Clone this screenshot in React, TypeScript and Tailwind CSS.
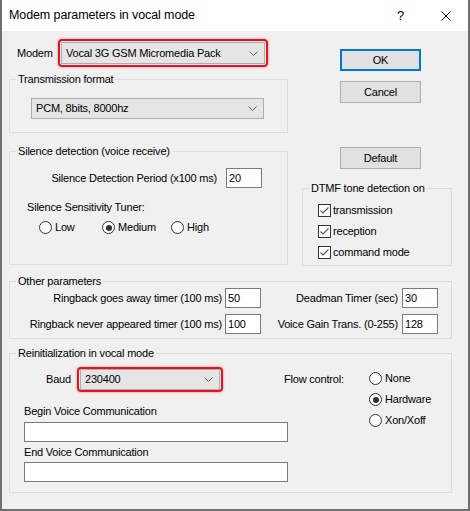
import type { ReactNode } from 'react'

// Win10-style "Modem parameters in vocal mode" dialog.

function Chevron() {
    return (
        <svg width="9" height="5" viewBox="0 0 9 5" className="shrink-0" aria-hidden="true">
            <path d="M0.5 0.5 L4.5 4.5 L8.5 0.5" fill="none" stroke="#606060" strokeWidth="1" />
        </svg>
    )
}

function ComboBox({ value, className = '' }: { value: string; className?: string }) {
    return (
        <div
            className={`flex items-center justify-between border border-[#adadad] bg-[#e5e5e5] pl-[4px] pr-[6px] ${className}`}
        >
            <span>{value}</span>
            <Chevron />
        </div>
    )
}

// Red rounded outline drawn round a combo box to call it out.
function Highlight({ className = '', children }: { className?: string; children: ReactNode }) {
    return (
        <div
            className={`rounded-[4px] border-2 border-[#e81123] shadow-[0_0_3px_rgba(232,17,35,0.45)] ${className}`}
        >
            {children}
        </div>
    )
}

function TextBox({ value = '', className = '' }: { value?: string; className?: string }) {
    return (
        <div className={`h-[20px] border border-[#7a7a7a] bg-white pl-[2px] leading-[18px] ${className}`}>
            {value}
        </div>
    )
}

function Button({ label, focused = false, className = '' }: { label: string; focused?: boolean; className?: string }) {
    return (
        <div
            className={`flex h-[22px] w-[81px] items-center justify-center bg-[#e1e1e1] ${
                focused ? 'border-2 border-[#0078d7]' : 'border border-[#adadad]'
            } ${className}`}
        >
            {label}
        </div>
    )
}

function Radio({ label, checked = false, className = '' }: { label: string; checked?: boolean; className?: string }) {
    return (
        <div className={`flex items-center gap-[3px] ${className}`}>
            <span className="flex h-[13px] w-[13px] items-center justify-center rounded-full border border-[#333333] bg-white">
                {checked && <span className="h-[6px] w-[6px] rounded-full bg-[#333333]" />}
            </span>
            {label}
        </div>
    )
}

function Checkbox({ label }: { label: string }) {
    return (
        <div className="flex h-[21px] items-center gap-[2px] pl-[15px]">
            <span className="flex h-[13px] w-[13px] items-center justify-center border border-[#333333] bg-white">
                <svg width="11" height="11" viewBox="0 0 11 11" aria-hidden="true">
                    <path d="M1.5 5.5 L4 8 L9.5 2.5" fill="none" stroke="#555555" strokeWidth="1.1" />
                </svg>
            </span>
            {label}
        </div>
    )
}

function Group({ title, className = '', children }: { title: string; className?: string; children: ReactNode }) {
    return (
        <fieldset className={`border border-[#dcdcdc] ${className}`}>
            <legend className="ml-[6px] px-[2px] leading-[13px]">{title}</legend>
            {children}
        </fieldset>
    )
}

export default function App() {
    return (
        <div className="flex h-[511px] w-[470px] flex-col overflow-hidden border-x-2 border-b-2 border-[#707070] bg-[#f0f0f0] font-['Liberation_Sans',Arial,sans-serif] text-[11px] leading-[13px] tracking-[-0.2px] text-black">
            {/* title bar */}
            <div className="flex h-[31px] shrink-0 items-center bg-white pl-[7px] pr-[17px]">
                <span className="flex-1 text-[12.5px] tracking-[-0.1px]">Modem parameters in vocal mode</span>
                <span className="text-[13px]">?</span>
                <svg width="10" height="10" viewBox="0 0 10 10" className="ml-[37px]" aria-hidden="true">
                    <path d="M0.5 0.5 L9.5 9.5 M9.5 0.5 L0.5 9.5" stroke="#000000" strokeWidth="1" />
                </svg>
            </div>

            <div className="flex flex-1 flex-col pl-[7px] pr-[16px]">
                <div className="flex gap-[14px]">
                    {/* left column */}
                    <div className="flex w-[279px] flex-col">
                        <div className="mt-[8px] flex items-center">
                            <span className="ml-[8px] w-[41px]">Modem</span>
                            <Highlight className="w-[210px] p-[1px]">
                                <ComboBox value="Vocal 3G GSM Micromedia Pack" className="h-[22px]" />
                            </Highlight>
                        </div>

                        <Group title="Transmission format" className="mt-[6px] pt-[12px] pb-[13px]">
                            <ComboBox value="PCM, 8bits, 8000hz" className="ml-[21px] h-[21px] w-[233px]" />
                        </Group>

                        <Group title="Silence detection (voice receive)" className="mt-[12px] pt-[10px] pb-[30px]">
                            <div className="flex items-center">
                                <span className="w-[207px] text-right">Silence Detection Period (x100 ms)</span>
                                <TextBox value="20" className="ml-[9px] w-[36px]" />
                            </div>
                            <div className="mt-[13px] ml-[17px]">Silence Sensitivity Tuner:</div>
                            <div className="mt-[7px] ml-[29px] flex">
                                <Radio label="Low" className="w-[63px]" />
                                <Radio label="Medium" checked className="w-[69px]" />
                                <Radio label="High" />
                            </div>
                        </Group>
                    </div>

                    {/* right column */}
                    <div className="flex w-[150px] flex-col">
                        <Button label="OK" focused className="mt-[18px] ml-[38px]" />
                        <Button label="Cancel" className="mt-[10px] ml-[38px]" />
                        <Button label="Default" className="mt-[44px] ml-[38px]" />
                        <Group title="DTMF tone detection on" className="mt-[13px] pt-[5px] pb-[2px]">
                            <Checkbox label="transmission" />
                            <Checkbox label="reception" />
                            <Checkbox label="command mode" />
                        </Group>
                    </div>
                </div>

                <Group title="Other parameters" className="mt-[9px] pb-[4px]">
                    <div className="flex items-center">
                        <span className="w-[212px] text-right">Ringback goes away timer (100 ms)</span>
                        <TextBox value="50" className="ml-[3px] w-[36px]" />
                        <span className="w-[137px] text-right">Deadman Timer (sec)</span>
                        <TextBox value="30" className="ml-[4px] w-[36px]" />
                    </div>
                    <div className="mt-[6px] flex items-center">
                        <span className="w-[212px] text-right">Ringback never appeared timer (100 ms)</span>
                        <TextBox value="100" className="ml-[3px] w-[36px]" />
                        <span className="w-[137px] text-right">Voice Gain Trans. (0-255)</span>
                        <TextBox value="128" className="ml-[4px] w-[36px]" />
                    </div>
                </Group>

                <Group title="Reinitialization in vocal mode" className="mt-[8px] pb-[10px]">
                    <div className="flex">
                        <div className="flex w-[359px] flex-col">
                            <div className="mt-[7px] flex items-center">
                                <span className="ml-[36px] w-[31px]">Baud</span>
                                <Highlight className="w-[146px] px-[1px]">
                                    <ComboBox value="230400" className="h-[21px]" />
                                </Highlight>
                                <span className="ml-[61px]">Flow control:</span>
                            </div>
                            <div className="mt-[13px] ml-[14px]">Begin Voice Communication</div>
                            <TextBox className="mt-[4px] ml-[14px] w-[264px]" />
                            <div className="mt-[4px] ml-[14px]">End Voice Communication</div>
                            <TextBox className="mt-[3px] ml-[14px] w-[264px]" />
                        </div>
                        <div className="flex flex-col pt-[8px]">
                            <Radio label="None" className="h-[21px]" />
                            <Radio label="Hardware" checked className="h-[21px]" />
                            <Radio label="Xon/Xoff" className="h-[21px]" />
                        </div>
                    </div>
                </Group>
            </div>
        </div>
    )
}
